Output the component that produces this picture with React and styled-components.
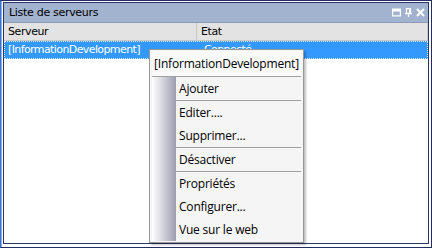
import React from "react";
import styled, { createGlobalStyle } from "styled-components";

const Global = createGlobalStyle`
  html, body {
    margin: 0;
    padding: 0;
    background: #ffffff;
  }
  body {
    font-family: "Liberation Sans", Arial, sans-serif;
  }
`;

const columns = [
  { label: "Serveur", width: 193 },
  { label: "Etat", width: 0 },
];

const menuItems = [
  { label: "Ajouter", sepAfter: true },
  { label: "Editer...." },
  { label: "Supprimer...", sepAfter: true },
  { label: "Désactiver", sepAfter: true },
  { label: "Propriétés" },
  { label: "Configurer..." },
  { label: "Vue sur le web" },
];

const App = () => {
  return (
    <Frame>
      <Global />
      <Panel>
        <TitleBar>
          <Title>Liste de serveurs</Title>
          <TitleButtons>
            <svg width="9" height="9" viewBox="0 0 9 9">
              <rect x="0.6" y="1.1" width="7.8" height="6.8" fill="none" stroke="#fff" strokeWidth="1.2" />
              <rect x="0.6" y="1.1" width="7.8" height="2.4" fill="#fff" />
            </svg>
            <svg width="9" height="9" viewBox="0 0 9 9">
              <rect x="2.5" y="0.6" width="4" height="4.8" fill="none" stroke="#fff" strokeWidth="1.2" />
              <rect x="5" y="0.6" width="1.5" height="4.8" fill="#fff" />
              <line x1="1" y1="5.6" x2="8" y2="5.6" stroke="#fff" strokeWidth="1.3" />
              <line x1="4.5" y1="5.6" x2="4.5" y2="9" stroke="#fff" strokeWidth="1.3" />
            </svg>
            <svg width="9" height="9" viewBox="0 0 9 9">
              <path d="M1 1 L8 8 M8 1 L1 8" stroke="#fff" strokeWidth="2.1" />
            </svg>
          </TitleButtons>
        </TitleBar>
        <HeaderRow>
          {columns.map((c) => (
            <HeaderCell key={c.label} $width={c.width}>
              {c.label}
            </HeaderCell>
          ))}
        </HeaderRow>
        <Body>
          <Row $selected>
            <Cell $width={193}>[InformationDevelopment]</Cell>
            <Cell>Connecté</Cell>
          </Row>
        </Body>

        <Menu>
          <MenuHeader>[InformationDevelopment]</MenuHeader>
          <MenuList>
            {menuItems.map((item) => (
              <React.Fragment key={item.label}>
                <MenuItem>{item.label}</MenuItem>
                {item.sepAfter && <MenuSep />}
              </React.Fragment>
            ))}
          </MenuList>
        </Menu>
      </Panel>
    </Frame>
  );
};

const Frame = styled.div`
  width: 432px;
  height: 248px;
  box-sizing: border-box;
  border: 1px solid #202c62;
  border-left-color: #3a6fd0;
  padding: 1px 2px 3px 2px;
  background: #ffffff;
  box-shadow: inset 1px 0 0 #8cb4ec;
`;

const Panel = styled.div`
  position: relative;
  height: 100%;
  box-sizing: border-box;
  border: 1px solid #2c356a;
  display: flex;
  flex-direction: column;
  background: #ffffff;
`;

const TitleBar = styled.div`
  height: 19px;
  display: flex;
  align-items: center;
  justify-content: space-between;
  padding: 0 3px 0 5px;
  background: #a2b3cf;
  border-bottom: 1px solid #8d9bb5;
`;

const Title = styled.div`
  font-family: "DejaVu Sans", Tahoma, sans-serif;
  font-size: 11px;
  letter-spacing: -0.3px;
  color: #000;
`;

const TitleButtons = styled.div`
  display: flex;
  gap: 3px;
  align-items: center;
`;

const HeaderRow = styled.div`
  height: 17px;
  display: flex;
  background: #e3e3e3;
  border-bottom: 1px solid #c8c8c8;
`;

const HeaderCell = styled.div`
  ${(p) => (p.$width ? `width: ${p.$width}px; flex: none;` : "flex: 1;")}
  box-sizing: border-box;
  padding-left: 4px;
  line-height: 17px;
  font-family: "DejaVu Sans", Tahoma, sans-serif;
  font-size: 11px;
  letter-spacing: -0.4px;
  border-right: 1px solid #c8c8c8;
`;

const Body = styled.div`
  flex: 1;
  background: #ffffff;
`;

const Row = styled.div`
  height: 18px;
  display: flex;
  box-sizing: border-box;
  background: ${(p) => (p.$selected ? "#3399ff" : "transparent")};
  color: ${(p) => (p.$selected ? "#ffffff" : "#000")};
  border: 1px dotted ${(p) => (p.$selected ? "#d8e8ff" : "transparent")};
`;

const Cell = styled.div`
  ${(p) => (p.$width ? `width: ${p.$width}px; flex: none;` : "flex: 1;")}
  padding-left: 3px;
  line-height: 16px;
  font-family: "DejaVu Sans", Tahoma, sans-serif;
  font-size: 11px;
  letter-spacing: -0.6px;
`;

const Menu = styled.div`
  position: absolute;
  left: 145px;
  top: 46px;
  width: 155px;
  box-sizing: border-box;
  border: 1px solid #979797;
  background: #f5f5f5;
  box-shadow: 2px 2px 2px rgba(0, 0, 0, 0.25);
  font-family: "Open Sans", "Segoe UI", sans-serif;
  font-size: 12px;
  color: #000;
`;

const MenuHeader = styled.div`
  height: 25px;
  line-height: 26px;
  text-align: center;
  letter-spacing: -0.2px;
  margin: 1px 2px 0 2px;
  border-bottom: 1px solid #a0a0a0;
  background: #fafafa;
`;

const MenuList = styled.div`
  display: flex;
  flex-direction: column;
  margin: 0 2px 1px 2px;
  background: linear-gradient(
      to right,
      #ffffff 0px,
      #d8d8e0 10px,
      #9c9cb0 24px,
      transparent 24px
    ),
    #f5f5f5;
`;

const MenuItem = styled.div`
  height: 23px;
  line-height: 23px;
  padding-left: 27px;
  letter-spacing: -0.2px;
`;

const MenuSep = styled.div`
  height: 1px;
  margin: 0 0 0 24px;
  background: #a0a0a0;
`;

export default App;
